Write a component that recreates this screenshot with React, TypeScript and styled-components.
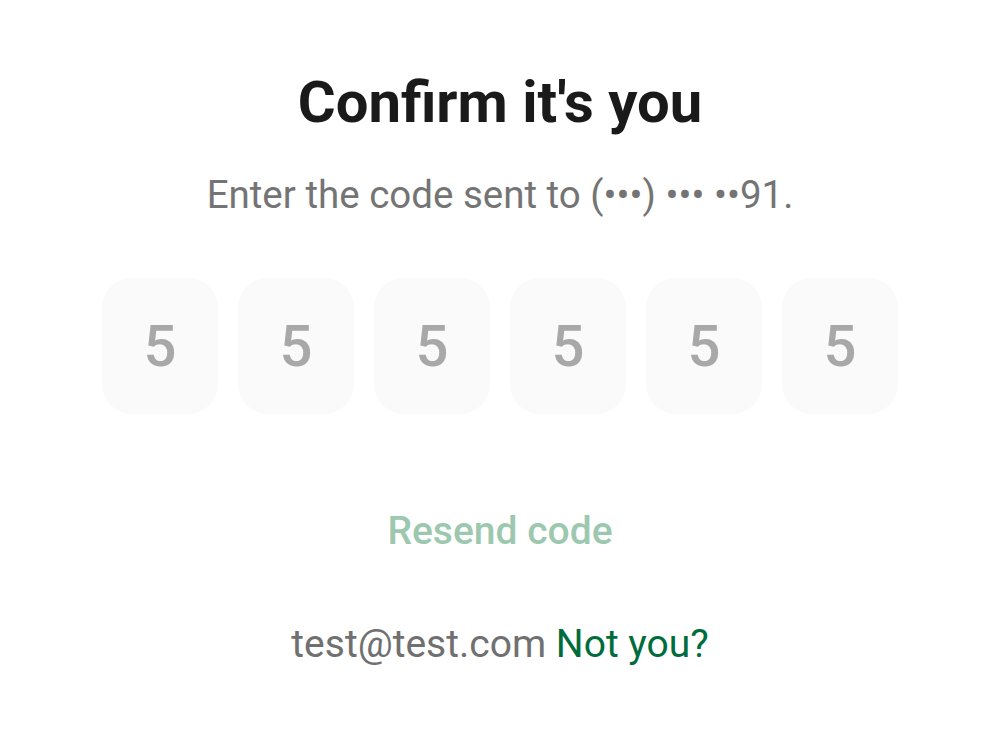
import React from "react";
import styled, { createGlobalStyle } from "styled-components";

const Global = createGlobalStyle`
  html, body { margin: 0; padding: 0; background: #ffffff; }
  body { font-family: Roboto, "Noto Sans", Arial, sans-serif; }
`;

const Page = styled.div`
  width: 1000px;
  height: 745px;
  display: flex;
  flex-direction: column;
  align-items: center;
  padding-top: 66px;
  box-sizing: border-box;
`;

const Title = styled.h1`
  margin: 0;
  font-size: 58px;
  line-height: 72px;
  font-weight: 700;
  color: #1a1a1a;
`;

const Subtitle = styled.p`
  margin: 35px 0 0;
  font-size: 38.5px;
  line-height: 44px;
  color: #747474;
`;

const CodeRow = styled.div`
  display: flex;
  gap: 20px;
  margin-top: 61px;
`;

const CodeBox = styled.div`
  width: 116px;
  height: 136px;
  border-radius: 30px;
  background: #fafafa;
  display: flex;
  align-items: center;
  justify-content: center;
  font-size: 58px;
  font-weight: 500;
  color: #a8a8a8;
`;

const Resend = styled.button`
  margin-top: 95px;
  border: none;
  background: none;
  padding: 0;
  font-family: inherit;
  font-size: 39px;
  line-height: 44px;
  font-weight: 500;
  color: #9dc8b0;
`;

const Footer = styled.p`
  margin: 69px 0 0;
  font-size: 39px;
  line-height: 44px;
  color: #707070;
`;

const Link = styled.span`
  color: #006b3c;
`;

export default function App() {
  const digits = ["5", "5", "5", "5", "5", "5"];
  return (
    <>
      <Global />
      <Page>
        <Title>Confirm it's you</Title>
        <Subtitle>Enter the code sent to (•••) ••• ••91.</Subtitle>
        <CodeRow>
          {digits.map((d, i) => (
            <CodeBox key={i}>{d}</CodeBox>
          ))}
        </CodeRow>
        <Resend>Resend code</Resend>
        <Footer>
          test@test.com <Link>Not you?</Link>
        </Footer>
      </Page>
    </>
  );
}
